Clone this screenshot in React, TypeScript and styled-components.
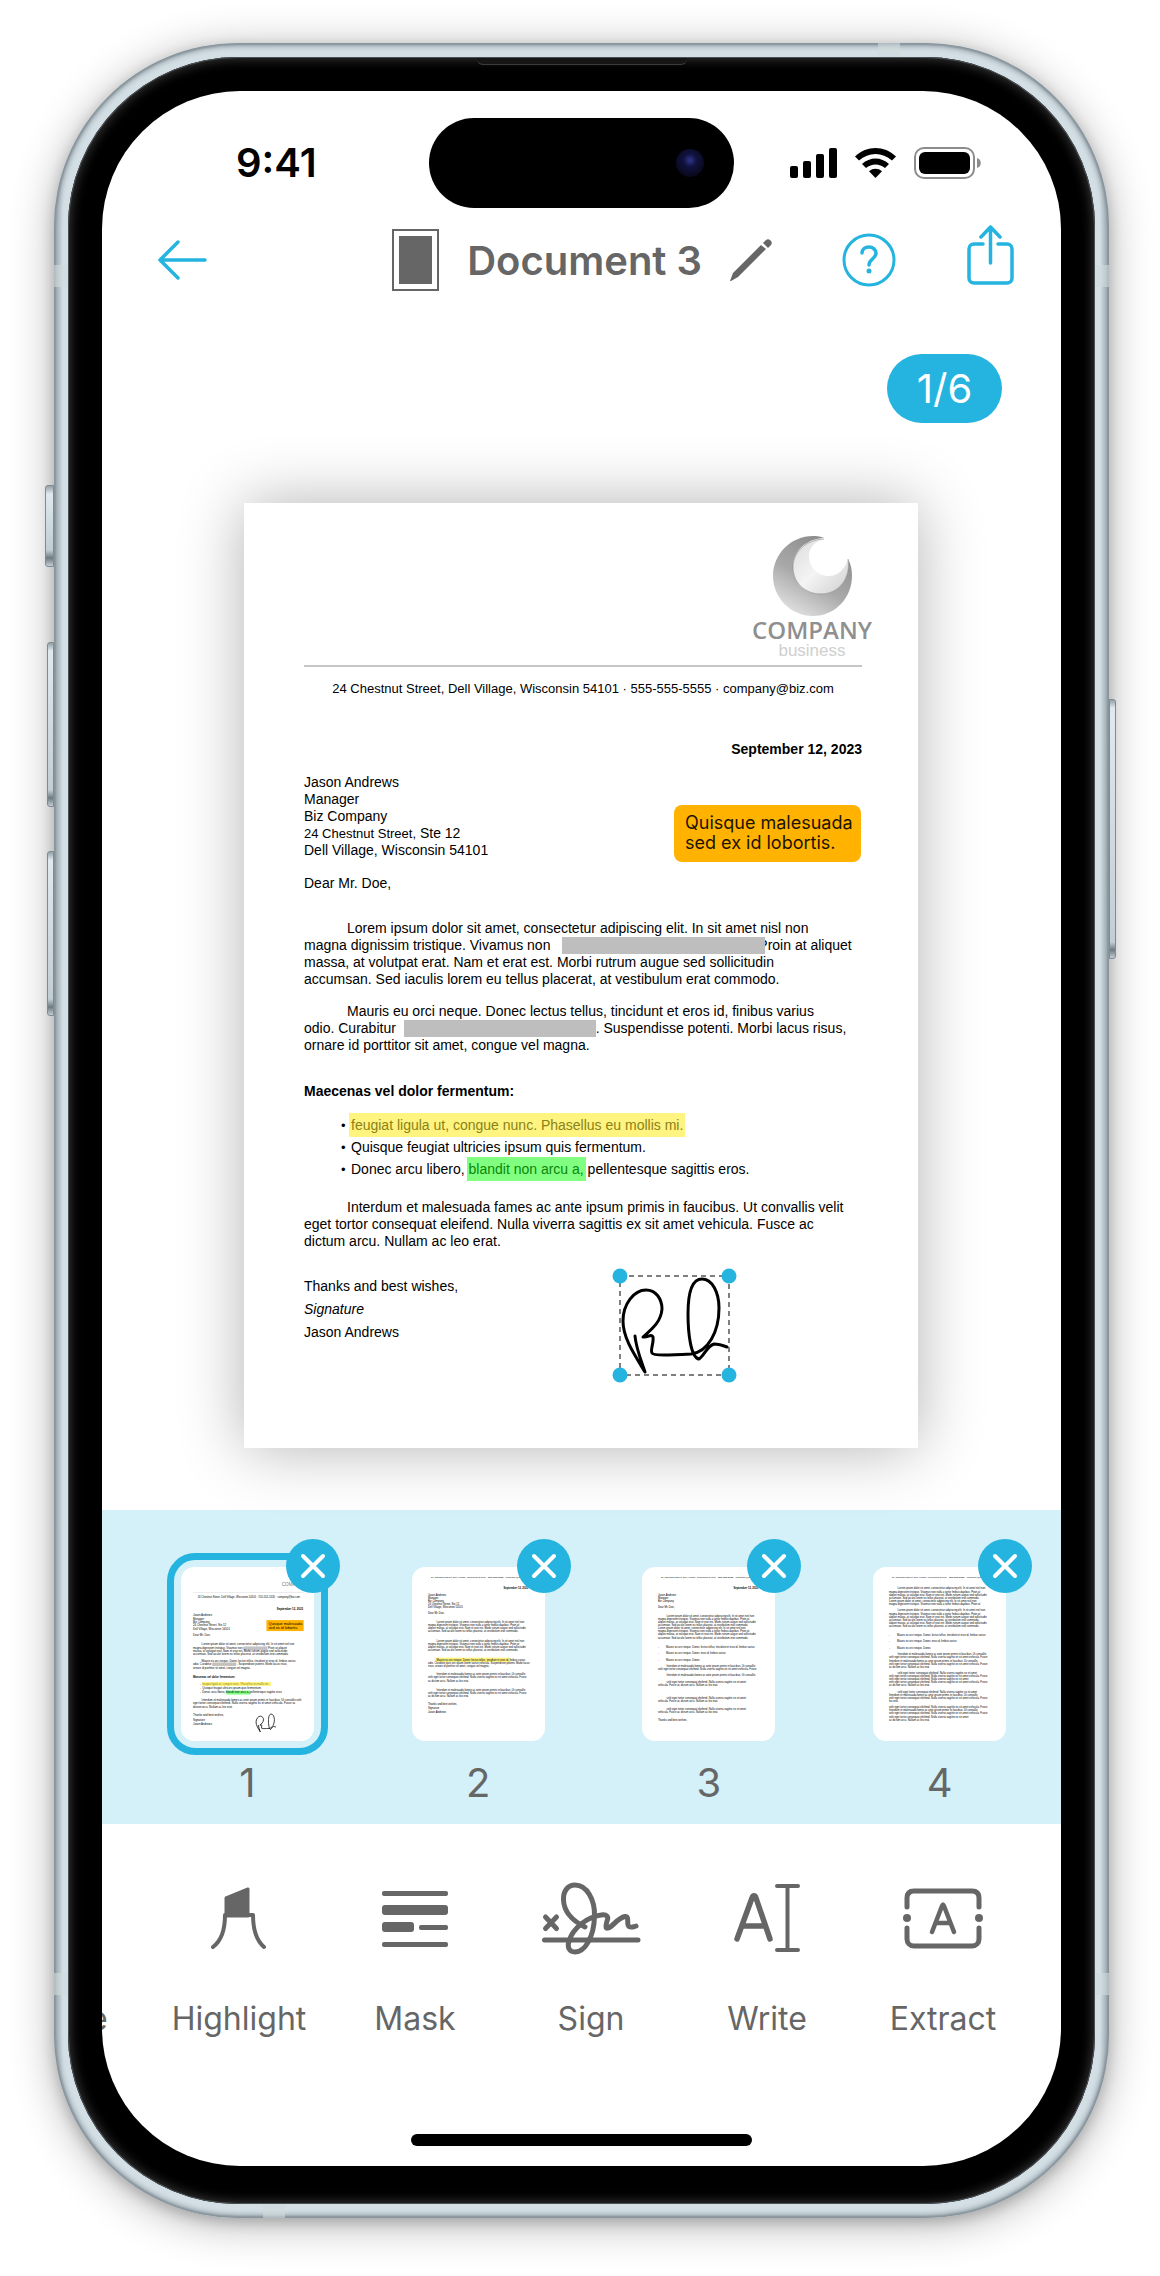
import React from "react";
import styled, { createGlobalStyle, css } from "styled-components";

const BLUE = "#25b4df";
const GREY = "#666666";
const UI = 'Inter, "Noto Sans", sans-serif';
const PRINT = '"Liberation Sans", Arial, sans-serif';

const Global = createGlobalStyle`
  * { box-sizing: border-box; }
  body { margin: 0; background: #fff; font-family: ${UI}; }
  button { border: 0; padding: 0; margin: 0; background: none; font: inherit; color: inherit; cursor: pointer; }
  svg { display: block; overflow: visible; }
`;

/* ---------- Device ---------- */

const Page = styled.main`
  padding: 43px 51px 59px 54px;
`;

const Phone = styled.div`
  position: relative;
  padding: 14px;
  border-radius: 184px;
  background: linear-gradient(90deg, #a3b0b7 0, #d3dfe5 9px, #d3dfe5 calc(100% - 9px), #a3b0b7 100%);
  box-shadow:
    inset 0 0 2px 2px #87939a,
    inset 0 0 5px 4px #a3afb6,
    0 4px 14px rgba(0, 0, 0, 0.2),
    0 6px 44px rgba(0, 0, 0, 0.3);
`;

const Bezel = styled.div`
  position: relative;
  padding: 34px 34px 38px;
  border-radius: 170px;
  background: #000;
  box-shadow: inset 0 0 0 1px #4b5256, inset 0 0 12px 2px #3a3a3a;
`;

const Screen = styled.div`
  display: flex;
  flex-direction: column;
  overflow: hidden;
  border-radius: 138px;
  background: #fff;
`;

const SideButton = styled.span<{ $side: "left" | "right"; $top: number; $height: number; $depth: number }>`
  position: absolute;
  ${(p) => p.$side}: ${(p) => -p.$depth}px;
  top: ${(p) => p.$top}px;
  width: ${(p) => p.$depth}px;
  height: ${(p) => p.$height}px;
  border: 1px solid #7f8b91;
  border-radius: ${(p) => (p.$side === "left" ? "3px 0 0 3px" : "0 3px 3px 0")};
  background: linear-gradient(180deg, #93a0a6 0, #dfe9ee 8px, #c3ced4 calc(100% - 16px), #6f7b81 calc(100% - 8px), #c3ced4 100%);
`;

const bandSpots = {
  leftTop: css`left: 0; top: 222px; width: 14px; height: 22px;`,
  leftBottom: css`left: 0; bottom: 223px; width: 14px; height: 22px;`,
  rightTop: css`right: 0; top: 222px; width: 14px; height: 22px;`,
  rightBottom: css`right: 0; bottom: 223px; width: 14px; height: 22px;`,
  top: css`right: 209px; top: 0; width: 22px; height: 14px;`,
  bottom: css`left: 209px; bottom: 0; width: 22px; height: 14px;`,
};

const Band = styled.span<{ $spot: keyof typeof bandSpots }>`
  position: absolute;
  background: rgba(208, 219, 220, 0.6);
  ${(p) => bandSpots[p.$spot]}
`;

const Earpiece = styled.span`
  position: absolute;
  top: 1px;
  left: 50%;
  width: 210px;
  height: 7px;
  margin-left: -105px;
  border-radius: 0 0 6px 6px;
  border-bottom: 1px solid #3c3c3c;
  background: #161616;
`;

/* ---------- Status bar ---------- */

const StatusBar = styled.div`
  display: grid;
  grid-template-columns: 1fr 305px 1fr;
  align-items: center;
  margin-top: 27px;
`;

const Time = styled.time`
  padding-left: 134px;
  font-size: 40px;
  line-height: 48px;
  font-weight: 600;
  color: #000;
`;

const Island = styled.div`
  display: flex;
  justify-content: flex-end;
  align-items: center;
  height: 90px;
  padding-right: 30px;
  border-radius: 45px;
  background: #000;
`;

const Lens = styled.span`
  width: 28px;
  height: 28px;
  border-radius: 50%;
  background: radial-gradient(circle at 50% 40%, #31358c 0, #11123f 30%, #0b0b26 60%, #030308 100%);
`;

const StatusIcons = styled.div`
  display: flex;
  justify-content: flex-end;
  align-items: center;
  gap: 18px;
  padding-right: 80px;
`;

/* ---------- Header ---------- */

const Header = styled.header`
  display: flex;
  align-items: center;
  height: 104px;
  padding: 0 47px 0 56px;
  color: ${BLUE};
`;

const TitleGroup = styled.div`
  display: flex;
  align-items: center;
  gap: 28px;
  margin-left: auto;
  color: ${GREY};
`;

const Title = styled.h1`
  margin: 0;
  padding-top: 2px;
  font-size: 40px;
  line-height: 48px;
  font-weight: 600;
  white-space: nowrap;
`;

const HeaderActions = styled.div`
  display: flex;
  align-items: center;
  gap: 71px;
  margin-left: 70px;
`;

const PageBadge = styled.div`
  align-self: flex-end;
  display: flex;
  align-items: center;
  justify-content: center;
  width: 115px;
  height: 69px;
  margin: 42px 59px 0 0;
  border-radius: 35px;
  background: ${BLUE};
  color: #fff;
  font-size: 40px;
  line-height: 48px;
`;

/* ---------- Letter ---------- */

const Sheet = styled.article`
  position: relative;
  display: flex;
  flex-direction: column;
  margin: 80px 143px 62px 142px;
  padding: 33px 56px 104px 60px;
  background: #fff;
  box-shadow: 0 0 60px rgba(0, 0, 0, 0.3);
  color: #000;
  font-family: ${PRINT};
  font-size: 14px;
  line-height: 17px;
  white-space: nowrap;
`;

const Logo = styled.div`
  align-self: flex-end;
  display: flex;
  flex-direction: column;
  align-items: center;
  width: 124px;
  margin-right: -12px;
`;

const LogoName = styled.strong`
  margin-top: 2px;
  font-family: "Open Sans", "Noto Sans", sans-serif;
  font-size: 24px;
  line-height: 24px;
  font-weight: 600;
  color: #8f8f8f;
`;

const LogoTag = styled.span`
  font-size: 17px;
  line-height: 18px;
  color: #cfcfcf;
`;

const Rule = styled.hr`
  width: 100%;
  height: 2px;
  margin: 5px 0 13px;
  border: 0;
  background: #c6c6c6;
`;

const Contact = styled.p`
  margin: 0;
  font-size: 13px;
  text-align: center;
`;

const DateLine = styled.p`
  margin: 44px 0 16px;
  text-align: right;
  font-weight: 700;
`;

const Plain = styled.p<{ $after: number }>`
  margin: 0 0 ${(p) => p.$after}px;
`;

const Small = styled.span`
  font-size: 13px;
`;

const Paragraph = styled.p<{ $after: number }>`
  margin: 0 0 ${(p) => p.$after}px;
  text-indent: 43px;
`;

const Redacted = styled.span<{ $width: number; $cover?: boolean }>`
  display: inline-block;
  position: relative;
  width: ${(p) => p.$width}px;
  height: 17px;
  margin-left: ${(p) => (p.$cover ? 8 : 4)}px;
  margin-right: ${(p) => (p.$cover ? -7 : 0)}px;
  vertical-align: top;
  background: #bebebe;
`;

const Subhead = styled.h2`
  margin: 0 0 15px;
  font-size: 14px;
  line-height: 17px;
  font-weight: 700;
`;

const Bullets = styled.ul`
  margin: 0 0 18px;
  padding: 0 0 0 37px;
  list-style: none;
  line-height: 21px;

  li {
    height: 22px;
  }

  li::before {
    content: "•";
    display: inline-block;
    width: 10px;
    font-size: 13px;
  }
`;

const Mark = styled.mark<{ $tone: "yellow" | "green" }>`
  margin: 0 -2px;
  padding: 4px 2px;
  ${(p) =>
    p.$tone === "yellow"
      ? css`background: #fff480; color: #8a8216;`
      : css`background: #80ff80; color: #0a860a;`}
`;

const Closing = styled.p`
  margin: 5px 0 0;
  line-height: 23px;
`;

const Note = styled.aside`
  position: absolute;
  top: 302px;
  right: 57px;
  width: 187px;
  padding: 8px 0 9px 11px;
  border-radius: 8px;
  background: #ffb300;
  font-family: ${UI};
  font-size: 18px;
  line-height: 20px;
  color: #1c1400;
`;

const SignatureBox = styled.div`
  position: absolute;
  top: 773px;
  left: 376px;
`;

/* ---------- Page strip ---------- */

const Strip = styled.nav`
  display: grid;
  grid-template-columns: repeat(4, 1fr);
  justify-items: center;
  padding: 43px 6px 21px 30px;
  background: #d4f0f9;
`;

const StripItem = styled.div`
  position: relative;
  display: flex;
  flex-direction: column;
  align-items: center;
  gap: 8px;
  width: 161px;
`;

const ThumbButton = styled.button<{ $selected: boolean }>`
  padding: 7px;
  border: 7px solid ${(p) => (p.$selected ? BLUE : "transparent")};
  border-radius: 28px;
`;

const ThumbPaper = styled.span`
  display: block;
  width: 133px;
  height: 174px;
  overflow: hidden;
  border-radius: 13px;
  background: #fff;
`;

const RemoveButton = styled.button`
  position: absolute;
  top: -14px;
  right: -12px;
  display: flex;
  align-items: center;
  justify-content: center;
  width: 54px;
  height: 54px;
  border-radius: 50%;
  background: ${BLUE};
`;

const PageNumber = styled.span`
  font-size: 40px;
  line-height: 40px;
  color: ${GREY};
`;

/* ---------- Tools ---------- */

const Tools = styled.div`
  display: grid;
  grid-template-columns: 49px repeat(5, 1fr);
  align-items: end;
  padding: 57px 30px 0 0;
  color: ${GREY};
`;

const Tool = styled.button`
  display: flex;
  flex-direction: column;
  align-items: center;
  gap: 46px;
`;

const PeekTool = styled.button`
  margin-left: -13px;
  text-align: left;
`;

const ToolLabel = styled.span`
  display: block;
  font-size: 32px;
  line-height: 40px;
`;

const HomeBar = styled.div`
  align-self: center;
  width: 341px;
  height: 12px;
  margin: 95px 0 20px;
  border-radius: 6px;
  background: #000;
`;

/* ---------- Drawings ---------- */

const SIGNATURE =
  "M15 60C16 72 21 84 25 96C14 78 3 62 3 45C3 28 14 14 26 14C36 14 42 23 42 33C41 46 32 53 23 61C28 62 31 57 33 61C34 67 30 74 32 77C33 80 52 79 71 78C88 76 99 56 99 32C99 16 92 3 82 3C71 3 68 20 68 38C68 58 71 82 79 83C84 80 87 70 94 68C98 68 102 69 107 71";

const Moon = () => (
  <svg width="79" height="80" viewBox="0 0 79 80" aria-hidden="true">
    <defs>
      <linearGradient id="moonDark" x1="0.2" y1="1" x2="0.7" y2="0.1">
        <stop offset="0" stopColor="#e6e6e6" />
        <stop offset="0.5" stopColor="#a9a9a9" />
        <stop offset="1" stopColor="#8e8e8e" />
      </linearGradient>
      <linearGradient id="moonLight" x1="0" y1="0" x2="1" y2="1">
        <stop offset="0" stopColor="#dcdcdc" />
        <stop offset="0.5" stopColor="#f4f4f4" />
        <stop offset="1" stopColor="#cfcfcf" />
      </linearGradient>
    </defs>
    <path d="M51 2C46 0 43 0 40 0C18 0 0 18 0 40C0 62 18 80 40 80C62 80 79 62 79 40C79 34 78 28 75 23C78 42 66 58 48 58C31 58 20 46 20 31C20 16 32 3 51 2Z" fill="url(#moonDark)" />
    <path d="M51 3C32 4 20 17 20 31C20 46 31 58 48 58C66 58 78 42 75 23C72 33 65 40 56 40C44 40 36 30 36 20C36 12 42 5 51 3Z" fill="url(#moonLight)" />
    <path d="M51 3C32 4 20 17 20 31C20 46 31 58 48 58C66 58 78 42 75 23" fill="none" stroke="#858585" strokeWidth="0.6" />
  </svg>
);

const Signal = () => (
  <svg width="47" height="30" viewBox="0 0 47 30" aria-hidden="true">
    <rect x="0" y="18" width="8" height="12" rx="2" />
    <rect x="13" y="13" width="8" height="17" rx="2" />
    <rect x="26" y="6" width="8" height="24" rx="2" />
    <rect x="39" y="0" width="8" height="30" rx="2" />
  </svg>
);

const Wifi = () => (
  <svg width="41" height="30" viewBox="0 0 41 30" aria-hidden="true">
    <path d="M0 8.500C12 -2.800 29 -2.800 41 8.500L37 12.500C27.500 3.800 13.500 3.800 4 12.500Z" />
    <path d="M7 16C15 8.600 26 8.600 34 16L30 20C24.500 15.200 16.500 15.200 11 20Z" />
    <path d="M14 23.300C18 20 23 20 27 23.300L20.500 30Z" />
  </svg>
);

const Battery = () => (
  <svg width="67" height="32" viewBox="0 0 67 32" aria-hidden="true">
    <rect x="1" y="1" width="59" height="30" rx="9" fill="none" stroke="#8c8c8c" strokeWidth="2" />
    <rect x="5" y="5" width="51" height="22" rx="6" />
    <path d="M63 11C68 12 68 20 63 21Z" fill="#8c8c8c" />
  </svg>
);

const BackIcon = () => (
  <svg width="49" height="40" viewBox="0 0 49 40" fill="none" stroke="currentColor" strokeWidth="3.500" strokeLinecap="round" strokeLinejoin="round" aria-hidden="true">
    <path d="M47 20H2M20 2L2 20L20 38" />
  </svg>
);

const SheetIcon = () => (
  <svg width="47" height="62" viewBox="0 0 47 62" aria-hidden="true">
    <rect x="1" y="1" width="45" height="60" fill="none" stroke="currentColor" strokeWidth="2" />
    <rect x="7" y="7" width="33" height="48" fill="currentColor" />
  </svg>
);

const PencilIcon = () => (
  <svg width="42" height="42" viewBox="0 0 42 42" fill="currentColor" aria-hidden="true">
    <path d="M0 42L3 34L31 6L36 10L8 38L1 42Z" />
    <path d="M33 4L36 1C37 0 39 0 40 1L41 2C42 3 42 5 41 6L38 9Z" />
  </svg>
);

const HelpIcon = () => (
  <svg width="54" height="54" viewBox="0 0 54 54" fill="none" stroke="currentColor" strokeWidth="3" strokeLinecap="round" strokeLinejoin="round" aria-hidden="true">
    <circle cx="27" cy="27" r="25" />
    <path d="M20 20C20 16 23 14 27 14C31 14 34 17 34 20C34 26 27 26 27 32" strokeWidth="3.500" />
    <circle cx="27" cy="38" r="2.500" fill="currentColor" stroke="none" />
  </svg>
);

const ShareIcon = () => (
  <svg width="47" height="66" viewBox="0 0 47 66" fill="none" stroke="currentColor" strokeWidth="3.500" strokeLinecap="round" strokeLinejoin="round" aria-hidden="true">
    <path d="M16 17H7C4 17 2 19 2 22V51C2 54 4 56 7 56H40C43 56 45 54 45 51V22C45 19 43 17 40 17H31" />
    <path d="M23.500 36V0M14 10L23.500 0L33 10" />
  </svg>
);

const CloseIcon = () => (
  <svg width="24" height="24" viewBox="0 0 24 24" stroke="#fff" strokeWidth="4" strokeLinecap="round" aria-hidden="true">
    <path d="M2 2L22 22M22 2L2 22" />
  </svg>
);

const ToolSvg = ({ children }: { children: React.ReactNode }) => (
  <svg width="100" height="72" viewBox="0 0 100 72" fill="none" stroke="currentColor" strokeWidth="5" strokeLinecap="round" strokeLinejoin="round" aria-hidden="true">
    {children}
  </svg>
);

const tools = [
  {
    label: "Highlight",
    icon: (
      <ToolSvg>
        <path d="M37 17L59 8V35H37Z" fill="currentColor" strokeWidth="3" />
        <path d="M24 66C32 60 36 50 36 34H64C64 50 68 60 75 66" strokeWidth="4" />
      </ToolSvg>
    ),
  },
  {
    label: "Mask",
    icon: (
      <ToolSvg>
        <g fill="currentColor" stroke="none">
          <rect x="17" y="10" width="66" height="5" rx="2" />
          <rect x="17" y="24" width="66" height="10" rx="3" />
          <rect x="17" y="41" width="32" height="10" rx="3" />
          <rect x="54" y="44" width="29" height="5" rx="2" />
          <rect x="17" y="61" width="66" height="5" rx="2" />
        </g>
      </ToolSvg>
    ),
  },
  {
    label: "Sign",
    icon: (
      <ToolSvg>
        <path d="M4.500 36L15.500 47.500M15.500 36L4.500 47.500M3.500 59H97" />
        <path d="M44 46C32 40 23 31 22.500 19C22 10 27 4 34 4C46 4 54 19 53.500 35C53 56 44 71 34 71C28 71 26 66 28 60C32 47 46 36 60 34C66 33 68 36 66 40C65 44 64 48 67 47C72 46 76 37 84 35.500C89 35 85 43 88 45.500C90 47 92 46 95 45" />
      </ToolSvg>
    ),
  },
  {
    label: "Write",
    icon: (
      <ToolSvg>
        <path d="M20 58L35 17C36 14 38 14 39 17L53 58M26 45H48" strokeWidth="5.500" />
        <path d="M60 5H81M60 69H81M70.500 5V69" strokeWidth="4" />
      </ToolSvg>
    ),
  },
  {
    label: "Extract",
    icon: (
      <ToolSvg>
        <path d="M14 26V17C14 12 17 10 21 10H79C83 10 86 12 86 17V26M14 47V58C14 62 17 65 21 65H79C83 65 86 62 86 58V47" />
        <circle cx="14" cy="37" r="4" fill="currentColor" stroke="none" />
        <circle cx="86" cy="37" r="4" fill="currentColor" stroke="none" />
        <path d="M39 51L49 25C50 23 50 23 51 25L61 51M44 42H56" strokeWidth="4.500" />
      </ToolSvg>
    ),
  },
];

/* ---------- Thumbnails ---------- */

type Line = { x: number; y: number; t: string; bold?: boolean; size?: number; fill?: string };
type Block = { x: number; y: number; w: number; h: number; fill: string };

const CONTACT = "24 Chestnut Street, Dell Village, Wisconsin 54101 · 555-555-5555 · company@biz.com";
const L = [
  "Lorem ipsum dolor sit amet, consectetur adipiscing elit. In sit amet nisl non",
  "magna dignissim tristique. Vivamus non nulla a tortor finibus dapibus. Proin at",
  "aliquet massa, at volutpat erat. Nam et erat est. Morbi rutrum augue sed sollicitudin",
  "accumsan. Sed iaculis lorem eu tellus placerat, at vestibulum erat commodo.",
];
const M = [
  "Mauris eu orci neque. Donec lectus tellus, tincidunt et eros id, finibus varius",
  "odio. Curabitur quis orci quam lorem varius vehicula. Suspendisse potenti. Morbi lacus",
  "risus, ornare id porttitor sit amet, congue vel magna.",
];
const I = [
  "Interdum et malesuada fames ac ante ipsum primis in faucibus. Ut convallis",
  "velit eget tortor consequat eleifend. Nulla viverra sagittis ex sit amet vehicula. Fusce",
  "ac dictum arcu. Nullam ac leo erat.",
];
const V = ["velit eget tortor consequat eleifend. Nulla viverra sagittis ex sit amet", "vehicula. Fusce ac dictum arcu. Nullam ac leo erat."];
const BULLETS = ["Mauris eu orci neque. Donec lectus tellus, tincidunt et eros id, finibus varius", "Mauris eu orci neque. Donec eros id, finibus varius", "Mauris eu orci neque. Donec"];

const para = (x: number, y: number, lines: string[], indent = 26, step = 9.4): Line[] =>
  lines.map((t, i) => ({ x: i === 0 ? x + indent : x, y: y + i * step, t }));
const stack = (x: number, ys: number[], lines: string[]): Line[] => lines.map((t, i) => ({ x, y: ys[i], t }));

const thumbs: { size: number; lines: Line[]; blocks: Block[]; signed?: boolean }[] = [
  {
    size: 17,
    signed: true,
    blocks: [
      { x: 36, y: 75, w: 333, h: 1, fill: "#c6c6c6" },
      { x: 257, y: 159, w: 112, h: 33, fill: "#ffb300" },
      { x: 64, y: 345, w: 207, h: 12, fill: "#fff480" },
      { x: 136, y: 371, w: 72, h: 12, fill: "#80ff80" },
    ],
    lines: [
      { x: 303, y: 58, t: "COMPANY", size: 28, fill: "#777" },
      { x: 50, y: 92, t: CONTACT, size: 16 },
      { x: 288, y: 128, t: "September 12, 2023", bold: true },
      ...stack(36, [148, 158, 168, 178, 188, 208], ["Jason Andrews", "Manager", "Biz Company", "24 Chestnut Street, Ste 12", "Dell Village, Wisconsin 54101", "Dear Mr. Doe,"]),
      { x: 263, y: 173, t: "Quisque malesuada", size: 23 },
      { x: 263, y: 186, t: "sed ex id lobortis.", size: 23 },
      ...para(36, 235, [L[0], "magna dignissim tristique. Vivamus non ████████████ Proin at aliquet", "massa, at volutpat erat. Nam et erat est. Morbi rutrum augue sed sollicitudin", L[3]], 26, 10),
      ...para(36, 285, [M[0], "odio. Curabitur ████████████ . Suspendisse potenti. Morbi lacus risus,", "ornare id porttitor sit amet, congue vel magna."], 26, 10),
      { x: 36, y: 333, t: "Maecenas vel dolor fermentum:", bold: true },
      { x: 57, y: 354, t: "-" },
      { x: 57, y: 367, t: "-" },
      { x: 57, y: 379, t: "-" },
      { x: 64, y: 354, t: "feugiat ligula ut, congue nunc. Phasellus eu mollis mi.", fill: "#8a8216" },
      { x: 64, y: 367, t: "Quisque feugiat ultricies ipsum quis fermentum." },
      { x: 64, y: 379, t: "Donec arcu libero, blandit non arcu a, pellentesque sagittis eros." },
      ...para(36, 402, [I[0] + " velit", "eget tortor consequat eleifend. Nulla viverra sagittis ex sit amet vehicula. Fusce ac", "dictum arcu. Nullam ac leo erat."], 26, 10),
      ...stack(36, [449, 463, 476], ["Thanks and best wishes,", "Signature", "Jason Andrews"]),
    ],
  },
  {
    size: 16,
    blocks: [{ x: 69, y: 272, w: 227, h: 13, fill: "#fff480" }],
    lines: [
      { x: 57, y: 33, t: CONTACT, size: 15 },
      { x: 275, y: 67, t: "September 12, 2023", bold: true },
      ...stack(48, [86, 95, 105, 114, 123, 142], ["Jason Andrews", "Manager", "Biz Company", "24 Chestnut Street, Ste 12", "Dell Village, Wisconsin 54101", "Dear Mr. Doe,"]),
      ...para(48, 168, L),
      ...para(48, 225, L),
      ...para(48, 281, M),
      ...para(48, 325, I),
      ...para(48, 371, I),
      ...stack(48, [414, 427, 439], ["Thanks and best wishes,", "Signature", "Jason Andrews"]),
    ],
  },
  {
    size: 16,
    blocks: [],
    lines: [
      { x: 57, y: 33, t: CONTACT, size: 15 },
      { x: 275, y: 67, t: "September 12, 2023", bold: true },
      ...stack(48, [86, 95, 105, 124], ["Jason Andrews", "Manager", "Biz Company", "Dear Mr. Doe,"]),
      ...para(48, 149, [...L, ...L]),
      ...stack(48, [243, 262, 281], ["-", "-", "-"]),
      ...stack(72, [243, 262, 281], BULLETS),
      ...para(48, 300, I.slice(0, 2)),
      ...para(48, 328, I.slice(0, 1)),
      ...para(48, 347, V),
      ...para(48, 395, V),
      ...para(48, 430, V),
      { x: 48, y: 464, t: "Thanks and best wishes," },
    ],
  },
  {
    size: 16,
    blocks: [],
    lines: [
      { x: 57, y: 33, t: CONTACT, size: 15 },
      ...para(48, 67, [...L, L[0], L[1]]),
      ...para(48, 133, [...L, L[2], L[3]]),
      ...stack(48, [208, 226, 245], ["-", "-", "-"]),
      ...stack(72, [208, 226, 245], BULLETS),
      ...para(48, 265, [I[0], I[1], I[0], I[1], I[2]]),
      ...para(48, 321, [V[0], I[1], V[0], I[1], I[2]]),
      ...para(48, 377, [V[0], I[0], I[1], "leo erat."]),
      ...para(48, 424, [I[1], I[0], I[1], V[0], I[2]], 0),
    ],
  },
];

const Thumb = ({ index }: { index: number }) => {
  const { size, lines, blocks, signed } = thumbs[index];
  return (
    <svg width="133" height="174" viewBox="0 0 800 1044" fontFamily={PRINT} aria-hidden="true">
      {blocks.map((b, i) => (
        <rect key={i} x={b.x * 2} y={b.y * 2} width={b.w * 2} height={b.h * 2} fill={b.fill} />
      ))}
      {lines.map((l, i) => (
        <text key={i} x={l.x * 2} y={l.y * 2} fontSize={l.size ?? size} fontWeight={l.bold ? 700 : 400} fill={l.fill ?? "#000"}>
          {l.t.split(/(█+)/).map((part, k) =>
            part.startsWith("█") ? <tspan key={k} fill="#bebebe">{part}</tspan> : part
          )}
        </text>
      ))}
      {signed && <path d={SIGNATURE} transform="translate(448 880) scale(1.15)" fill="none" stroke="#000" strokeWidth="4" />}
    </svg>
  );
};

/* ---------- App ---------- */

const Letter = () => (
  <Sheet>
    <Logo>
      <Moon />
      <LogoName>COMPANY</LogoName>
      <LogoTag>business</LogoTag>
    </Logo>
    <Rule />
    <Contact>{CONTACT}</Contact>
    <DateLine>September 12, 2023</DateLine>
    <Plain $after={16}>
      Jason Andrews<br />
      Manager<br />
      Biz Company<br />
      <Small>24 Chestnut Street,</Small> Ste 12<br />
      Dell Village, Wisconsin 54101
    </Plain>
    <Plain $after={28}>Dear Mr. Doe,</Plain>
    <Paragraph $after={15}>
      Lorem ipsum dolor sit amet, consectetur adipiscing elit. In sit amet nisl non<br />
      magna dignissim tristique. Vivamus non <Redacted $width={203} $cover />Proin at aliquet<br />
      massa, at volutpat erat. Nam et erat est. Morbi rutrum augue sed sollicitudin<br />
      accumsan. Sed iaculis lorem eu tellus placerat, at vestibulum erat commodo.
    </Paragraph>
    <Paragraph $after={29}>
      Mauris eu orci neque. Donec lectus tellus, tincidunt et eros id, finibus varius<br />
      odio. Curabitur <Redacted $width={192} />. Suspendisse potenti. Morbi lacus risus,<br />
      ornare id porttitor sit amet, congue vel magna.
    </Paragraph>
    <Subhead>Maecenas vel dolor fermentum:</Subhead>
    <Bullets>
      <li><Mark $tone="yellow">feugiat ligula ut, congue nunc. Phasellus eu mollis mi.</Mark></li>
      <li>Quisque feugiat ultricies ipsum quis fermentum.</li>
      <li>Donec arcu libero, <Mark $tone="green">blandit non arcu a,</Mark> pellentesque sagittis eros.</li>
    </Bullets>
    <Paragraph $after={20}>
      Interdum et malesuada fames ac ante ipsum primis in faucibus. Ut convallis velit<br />
      eget tortor consequat eleifend. Nulla viverra sagittis ex sit amet vehicula. Fusce ac<br />
      dictum arcu. Nullam ac leo erat.
    </Paragraph>
    <Closing>
      Thanks and best wishes,<br />
      <em>Signature</em><br />
      Jason Andrews
    </Closing>
    <Note>
      Quisque malesuada<br />
      sed ex id lobortis.
    </Note>
    <SignatureBox>
      <svg width="109" height="99" viewBox="0 0 109 99" role="img" aria-label="Signature">
        <rect width="109" height="99" fill="none" stroke="#555" strokeWidth="1.500" strokeDasharray="5 4" />
        <path d={SIGNATURE} fill="none" stroke="#000" strokeWidth="3" strokeLinecap="round" strokeLinejoin="round" />
        {[0, 109].map((x) => [0, 99].map((y) => <circle key={`${x}-${y}`} cx={x} cy={y} r="7.500" fill={BLUE} />))}
      </svg>
    </SignatureBox>
  </Sheet>
);

export default function App() {
  const [selected, setSelected] = React.useState(0);
  return (
    <Page>
      <Global />
      <Phone>
        <SideButton $side="left" $top={442} $height={82} $depth={9} />
        <SideButton $side="left" $top={599} $height={165} $depth={7} />
        <SideButton $side="left" $top={808} $height={165} $depth={7} />
        <SideButton $side="right" $top={656} $height={260} $depth={7} />
        {(Object.keys(bandSpots) as (keyof typeof bandSpots)[]).map((spot) => (
          <Band key={spot} $spot={spot} />
        ))}
        <Bezel>
          <Earpiece />
          <Screen>
            <StatusBar>
              <Time>9:41</Time>
              <Island><Lens /></Island>
              <StatusIcons>
                <Signal />
                <Wifi />
                <Battery />
              </StatusIcons>
            </StatusBar>
            <Header>
              <button aria-label="Back"><BackIcon /></button>
              <TitleGroup>
                <SheetIcon />
                <Title>Document 3</Title>
                <button aria-label="Rename"><PencilIcon /></button>
              </TitleGroup>
              <HeaderActions>
                <button aria-label="Help"><HelpIcon /></button>
                <button aria-label="Share"><ShareIcon /></button>
              </HeaderActions>
            </Header>
            <PageBadge>1/6</PageBadge>
            <Letter />
            <Strip aria-label="Pages">
              {thumbs.map((_, i) => (
                <StripItem key={i}>
                  <ThumbButton $selected={selected === i} onClick={() => setSelected(i)} aria-label={`Page ${i + 1}`}>
                    <ThumbPaper><Thumb index={i} /></ThumbPaper>
                  </ThumbButton>
                  <RemoveButton aria-label={`Remove page ${i + 1}`}><CloseIcon /></RemoveButton>
                  <PageNumber>{i + 1}</PageNumber>
                </StripItem>
              ))}
            </Strip>
            <Tools>
              <PeekTool><ToolLabel>e</ToolLabel></PeekTool>
              {tools.map((t) => (
                <Tool key={t.label}>
                  {t.icon}
                  <ToolLabel>{t.label}</ToolLabel>
                </Tool>
              ))}
            </Tools>
            <HomeBar />
          </Screen>
        </Bezel>
      </Phone>
    </Page>
  );
}
